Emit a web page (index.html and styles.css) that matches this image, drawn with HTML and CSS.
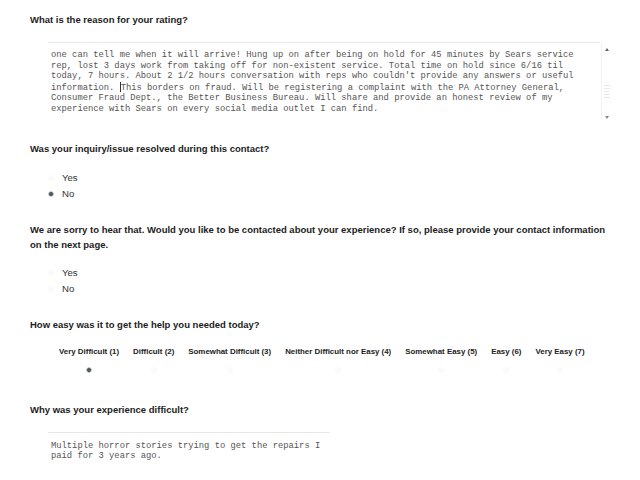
FILE: index.html
```html
<!DOCTYPE html>
<html>
<head>
<meta charset="utf-8">
<link rel="stylesheet" href="styles.css">
</head>
<body>
<div class="page">
  <section class="q q1">
    <h2 class="qt">What is the reason for your rating?</h2>
    <div class="tbox big">
      <div class="ttext">
        <div>one can tell me when it will arrive! Hung up on after being on hold for 45 minutes by Sears service</div>
        <div>rep, lost 3 days work from taking off for non-existent service. Total time on hold since 6/16 til</div>
        <div>today, 7 hours. About 2 1/2 hours conversation with reps who couldn't provide any answers or useful</div>
        <div>information. <span class="caret"></span>This borders on fraud. Will be registering a complaint with the PA Attorney General,</div>
        <div>Consumer Fraud Dept., the Better Business Bureau. Will share and provide an honest review of my</div>
        <div>experience with Sears on every social media outlet I can find.</div>
      </div>
      <div class="sbar">
        <span class="arr up"></span>
        <span class="sthumb"></span>
        <span class="arr down"></span>
      </div>
    </div>
  </section>

  <section class="q q2">
    <h2 class="qt">Was your inquiry/issue resolved during this contact?</h2>
    <div class="opts">
      <div class="opt"><span class="radio"></span><span>Yes</span></div>
      <div class="opt"><span class="radio on"></span><span>No</span></div>
    </div>
  </section>

  <section class="q q3">
    <h2 class="qt">We are sorry to hear that. Would you like to be contacted about your experience? If so, please provide your contact information on the next page.</h2>
    <div class="opts">
      <div class="opt"><span class="radio"></span><span>Yes</span></div>
      <div class="opt"><span class="radio"></span><span>No</span></div>
    </div>
  </section>

  <section class="q q4">
    <h2 class="qt">How easy was it to get the help you needed today?</h2>
    <div class="scale">
      <div class="col"><span class="lbl">Very Difficult (1)</span><span class="radio on"></span></div>
      <div class="col"><span class="lbl">Difficult (2)</span><span class="radio"></span></div>
      <div class="col"><span class="lbl">Somewhat Difficult (3)</span><span class="radio"></span></div>
      <div class="col"><span class="lbl">Neither Difficult nor Easy (4)</span><span class="radio"></span></div>
      <div class="col"><span class="lbl">Somewhat Easy (5)</span><span class="radio"></span></div>
      <div class="col"><span class="lbl">Easy (6)</span><span class="radio"></span></div>
      <div class="col"><span class="lbl">Very Easy (7)</span><span class="radio"></span></div>
    </div>
  </section>

  <section class="q q5">
    <h2 class="qt">Why was your experience difficult?</h2>
    <div class="tbox small">
      <div class="ttext">
        <div>Multiple horror stories trying to get the repairs I</div>
        <div>paid for 3 years ago.</div>
      </div>
    </div>
  </section>
</div>
</body>
</html>
```

FILE: styles.css
```css
html, body {
  margin: 0;
  padding: 0;
  background: #ffffff;
}
.page {
  padding: 12px 0 0 30px;
  font-family: "Liberation Sans", Arial, sans-serif;
  color: #1a1a1a;
}
.qt {
  margin: 0;
  font-size: 9.5px;
  font-weight: bold;
  line-height: 15px;
  color: #1c1c1c;
  width: 585px;
}
.tbox {
  margin-left: 18px;
  border-top: 1px solid #e8e8e8;
  display: flex;
  color: #555;
}
.tbox.big {
  margin-top: 15px;
  width: 552px;
  height: 76px;
}
.tbox.small {
  margin-top: 15px;
  width: 282px;
  height: 40px;
}
.ttext {
  flex: 1;
  padding: 7px 0 0 3px;
  font-family: "Liberation Mono", "Courier New", monospace;
  font-size: 8.8px;
  line-height: 10.5px;
  white-space: nowrap;
  color: #555;
}
.tbox.small .ttext {
  padding-top: 8px;
  line-height: 10px;
}
.caret {
  display: inline-block;
  width: 0;
  height: 10px;
  border-left: 1px solid #333;
  vertical-align: -2px;
}
.sbar {
  width: 10px;
  display: flex;
  flex-direction: column;
  align-items: center;
  margin-top: -1px;
  border-left: 1px solid #f2f2f2;
  position: relative;
  left: 12px;
}
.arr {
  width: 0;
  height: 0;
  border-left: 2px solid transparent;
  border-right: 2px solid transparent;
}
.arr.up {
  margin-top: 6px;
  border-bottom: 3px solid #666;
}
.arr.down {
  margin-top: 18px;
  border-top: 3px solid #888;
}
.sthumb {
  margin-top: 34px;
  width: 6px;
  height: 12px;
  border-top: 1px solid #e6e6e6;
  border-bottom: 1px solid #e6e6e6;
  background: repeating-linear-gradient(#fff 0 2px, #ececec 2px 3px);
}
.q2 { margin-top: 22px; }
.q3 { margin-top: 22px; }
.q4 { margin-top: 22px; }
.q5 { margin-top: 29px; }
.opts {
  margin-top: 15px;
  margin-left: 18px;
  display: flex;
  flex-direction: column;
  gap: 3px;
}
.q3 .opts {
  margin-top: 14px;
}
.opt {
  display: flex;
  align-items: center;
  gap: 8px;
  font-size: 9.6px;
  line-height: 13px;
  color: #333;
}
.radio {
  width: 6px;
  height: 6px;
  border-radius: 50%;
  background: #fafafa;
  box-sizing: border-box;
  display: inline-block;
}
.radio.on {
  background: radial-gradient(circle, #555 0 1.5px, #9aa 2.2px, #e8eeee 3px);
}
.scale {
  margin-top: 15px;
  margin-left: 29px;
  display: flex;
  gap: 14px;
}
.col {
  display: flex;
  flex-direction: column;
  align-items: center;
  gap: 10px;
}
.lbl {
  font-size: 7.9px;
  font-weight: bold;
  line-height: 10px;
  color: #222;
  white-space: nowrap;
}
```
